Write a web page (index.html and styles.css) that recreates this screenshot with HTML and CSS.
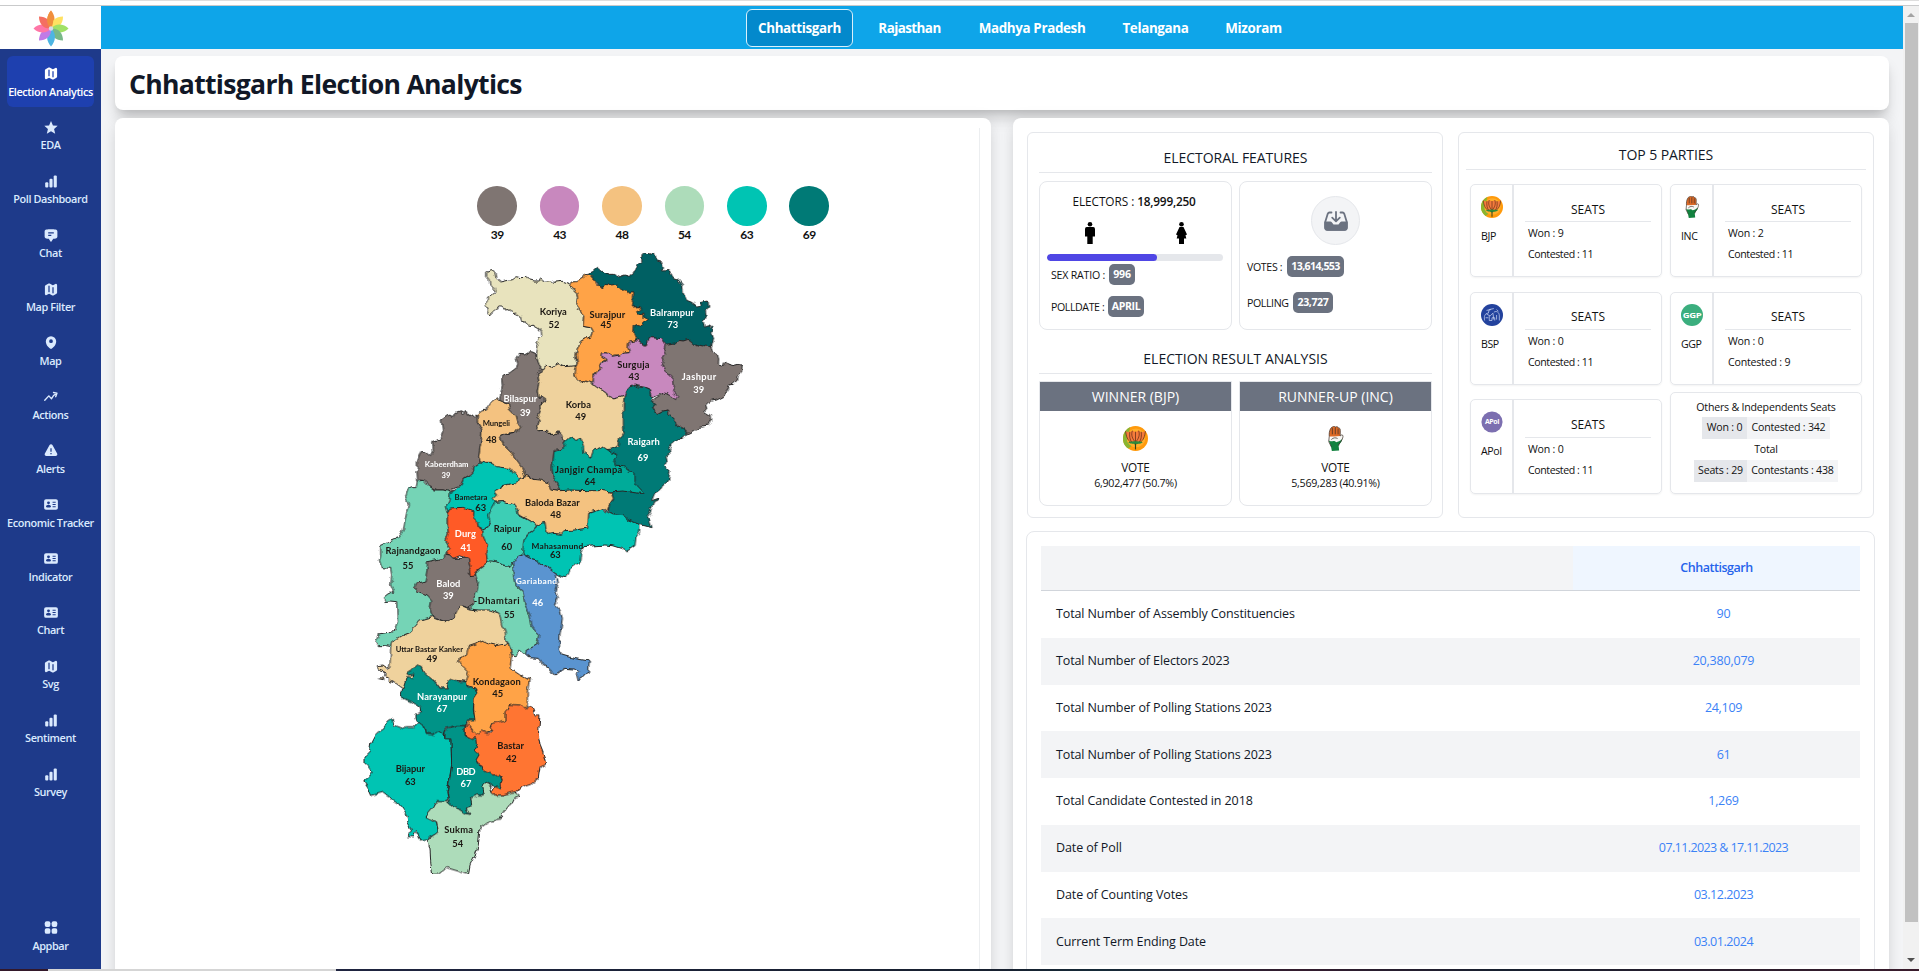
FILE: index.html
```
<!DOCTYPE html>
<html lang="en">
<head>
<meta charset="utf-8">
<title>Chhattisgarh Election Analytics</title>
<link rel="stylesheet" href="styles.css">
</head>
<body>
<svg class="defs" width="0" height="0">
  <defs>
    <symbol id="i-map" viewBox="0 0 24 24"><path fill-rule="evenodd" d="M8.161 2.58a1.875 1.875 0 011.678 0l4.993 2.498c.106.052.23.052.336 0l3.869-1.935A1.875 1.875 0 0121.75 4.82v12.485c0 .71-.401 1.36-1.037 1.677l-4.875 2.437a1.875 1.875 0 01-1.676 0l-4.994-2.497a.375.375 0 00-.336 0l-3.868 1.935A1.875 1.875 0 012.25 19.18V6.695c0-.71.401-1.36 1.036-1.677zM8.8 5.6a1 1 0 011 1V15.4a1 1 0 01-2 0V6.6A1 1 0 018.8 5.6zM16.2 9a1 1 0 00-2 0v8.25a1 1 0 002 0z"/></symbol>
    <symbol id="i-star" viewBox="0 0 24 24"><path d="M12 1.6l3.1 7 7.6.7-5.8 5 1.8 7.5L12 17.800l-6.7 4 1.800-7.500-5.800-5 7.600-.7z"/></symbol>
    <symbol id="i-bars" viewBox="0 0 24 24"><rect x="16.300" y="2.250" width="5" height="19.500" rx="1.800"/><rect x="9.500" y="7.500" width="5" height="14.250" rx="1.800"/><rect x="2.700" y="13" width="5" height="8.750" rx="1.800"/></symbol>
    <symbol id="i-chat" viewBox="0 0 24 24"><path fill-rule="evenodd" d="M4.500 2.500C8 2 16 2 19.500 2.500c1.700.2 2.700 1.600 2.700 3.200v8c0 1.700-1 3-2.700 3.200-1.300.2-2.600.3-3.900.4L12.700 21.500a1 1 0 01-1.500 0L8.400 17.300c-1.300-.1-2.600-.2-3.900-.4C2.800 16.700 1.800 15.400 1.800 13.700v-8C1.800 4.100 2.800 2.700 4.500 2.500zM7.500 6.800v1.800h9V6.800zm0 4v1.800h5v-1.800z"/></symbol>
    <symbol id="i-pin" viewBox="0 0 24 24"><path fill-rule="evenodd" d="M12 1.800a8.300 8.300 0 00-8.300 8.300c0 6 4.300 10 7.500 12a1.500 1.500 0 001.600 0c3.200-2 7.500-6 7.500-12A8.300 8.300 0 0012 1.800zm0 5a3 3 0 110 6 3 3 0 010-6z"/></symbol>
    <symbol id="i-trend" viewBox="0 0 24 24"><path fill="none" stroke="currentColor" stroke-width="2.200" stroke-linecap="round" stroke-linejoin="round" d="M2 18l6.500-7 4.300 4.500C14.500 11.500 17 8.800 21 7M16 5.600l5.500 1.200-2 5.500"/></symbol>
    <symbol id="i-alert" viewBox="0 0 24 24"><path fill-rule="evenodd" d="M9.700 3.300a2.700 2.700 0 014.600 0l7.500 13.500c1 1.800-.3 4-2.300 4h-15c-2 0-3.300-2.200-2.300-4zM11 8.500v5.500h2V8.500zm0 7.300v2h2v-2z"/></symbol>
    <symbol id="i-card" viewBox="0 0 24 24"><path fill-rule="evenodd" d="M4 3.500h16a3 3 0 013 3v11a3 3 0 01-3 3H4a3 3 0 01-3-3v-11a3 3 0 013-3zM8 7a2.300 2.300 0 100 4.600A2.300 2.300 0 008 7zm-4 9c0-2.600 1.700-3.700 4-3.700s4 1.100 4 3.700c-2.500 1.300-5.500 1.300-8 0zM14.500 7.500V9h5V7.500zm0 3.700v1.500h5v-1.500zm0 3.700v1.500h5v-1.500z"/></symbol>
    <symbol id="i-grid" viewBox="0 0 24 24"><rect x="2" y="2" width="9" height="9" rx="3"/><rect x="13" y="2" width="9" height="9" rx="3"/><rect x="2" y="13" width="9" height="9" rx="3"/><rect x="13" y="13" width="9" height="9" rx="3"/></symbol>
    <symbol id="i-bjp" viewBox="0 0 24 24">
      <circle cx="12" cy="12" r="12" fill="#ff9a0c"/><path d="M7 1A12 12 0 005 21.700C8 20 9 18 9 16L4 12z" fill="#8ab530"/><circle cx="12.500" cy="11.500" r="9" fill="#ffae2b"/>
      <path d="M2.500 5l4 1.200L9 4.500l3 1.200L15 4.500l2.500 1.700 4-1.200-1.500 7-3.500 3.300h-9L4 12z" fill="#f47a3c"/>
      <path d="M2.500 5c.5 5 2 9 5 10.500M6.500 5.500c-.5 4 0 8 2 10M9 4.500c-1.500 4 0 8 3 11M12 5.500v10M15 4.500c1.500 4 0 8-3 11M17.500 5.500c.5 4 0 8-2 10M21.500 5c-.5 5-2 9-5 10.500" fill="none" stroke="#5c2a14" stroke-width=".7"/>
      <path d="M5 15.500c4-1 10-1 14 0-3 2.200-5.500 1-7 2.500-1.500-1.500-4-.3-7-2.500z" fill="#2c8a3c"/><path d="M12 17v5.500" stroke="#33421b" stroke-width="1.100"/>
    </symbol>
    <symbol id="i-inc" viewBox="0 0 24 24">
      <path d="M6 10C5.500 4 8 1 9 1c1-1.200 2-1 3 0 1.300-.7 2.300-.3 2.800.8 1.300 0 1.800 1 1.800 2.500L16.500 10z" fill="#dd6a26"/>
      <path d="M5.500 14L8 11l8.500-1.500L18 8.500c1.300 0 1.300 1.300 0 5L15 16.500 6 17z" fill="#f7f7f4"/><path d="M5.500 14c2 2 5-1 7 1.500 2 0 4-1.500 6-3-.5 3.500-3 4.500-3.500 6.500l.5 4.500-7 .5-.8-4z" fill="#12823f"/>
      <path d="M6 10C5.500 4 8 1 9 1c1-1.200 2-1 3 0 1.300-.7 2.300-.3 2.800.8 1.300 0 1.800 1 1.800 2.500L16.500 9.500 18 8.500c2 0 1 3 .5 4-1 3-3.500 4-3.500 6.500M6 10l-.5 5L8 20M9 2v6M11.800 1.500V8M14.500 2.500V8M8 13c2-2 4-2 6-1" fill="none" stroke="#3d3029" stroke-width=".7"/>
    </symbol>
    <symbol id="i-bsp" viewBox="0 0 24 24"><circle cx="12" cy="12" r="12" fill="#23429d"/><path d="M4 18c-1-4 0-8 4-8l1-4 5-1M6 11l4 2 3-3 1 7M9 13v5h3v-3h3v3M14 9c3-2 6 0 6 4v5M17 6l2 2M5 15h3M17 12v5M6 7l5-1" fill="none" stroke="#c9d4f2" stroke-width=".8"/></symbol>
    <symbol id="i-ggp" viewBox="0 0 24 24"><circle cx="12" cy="12" r="12" fill="#3bae7e"/><text x="12" y="15.100" text-anchor="middle" textLength="20" lengthAdjust="spacingAndGlyphs" font-size="8.500" font-weight="700" fill="#fff">GGP</text></symbol>
    <symbol id="i-apol" viewBox="0 0 24 24"><circle cx="12" cy="12" r="11.500" fill="#7c6fb0"/><text x="12" y="14.500" text-anchor="middle" textLength="15.500" lengthAdjust="spacingAndGlyphs" font-size="6.800" font-weight="700" fill="#fff">APoI</text></symbol>
  </defs>
</svg>

<div class="edge-top"></div>
<div class="app">
  <aside class="side">
    <div class="logo">
      <svg width="36" height="37" viewBox="-18 -18 36 36">
        <g opacity=".95">
        <path d="M0 0C-5-5-4.500-13 0-18 4.500-13 5-5 0 0z" fill="#f08a33"/>
        <path d="M0 0C-6-5-5-12 0-17 5-12 6-5 0 0z" fill="#ffe05a" transform="rotate(45)"/>
        <path d="M0 0C-6-5-4.500-13 0-17.500 4.500-13 6-5 0 0z" fill="#9be05e" transform="rotate(90)"/>
        <path d="M0 0C-6-5-5-12 0-17 5-12 6-5 0 0z" fill="#71b583" transform="rotate(135)"/>
        <path d="M0 0C-6-5-4.500-13 0-18 4.500-13 6-5 0 0z" fill="#44b2e2" transform="rotate(180)"/>
        <path d="M0 0C-6-5-5-12 0-17 5-12 6-5 0 0z" fill="#bd74e6" transform="rotate(225)"/>
        <path d="M0 0C-6-5-4.500-13 0-17.500 4.500-13 6-5 0 0z" fill="#ff6fa3" transform="rotate(270)"/>
        <path d="M0 0C-6-5-5-12 0-17 5-12 6-5 0 0z" fill="#f4685a" transform="rotate(315)"/>
        <path d="M0 0C-6-5-4.500-13 0-18 3-13 3-5 0 0z" fill="#f08a33"/>
        </g>
        <circle r="2.200" fill="#d8dde8"/>
      </svg>
    </div>
    <nav class="menu">
      <a class="item active"><svg class="ico"><use href="#i-map"/></svg><span>Election Analytics</span></a>
      <a class="item"><svg class="ico"><use href="#i-star"/></svg><span>EDA</span></a>
      <a class="item"><svg class="ico"><use href="#i-bars"/></svg><span>Poll Dashboard</span></a>
      <a class="item"><svg class="ico"><use href="#i-chat"/></svg><span>Chat</span></a>
      <a class="item"><svg class="ico"><use href="#i-map"/></svg><span>Map Filter</span></a>
      <a class="item"><svg class="ico"><use href="#i-pin"/></svg><span>Map</span></a>
      <a class="item"><svg class="ico"><use href="#i-trend"/></svg><span>Actions</span></a>
      <a class="item"><svg class="ico"><use href="#i-alert"/></svg><span>Alerts</span></a>
      <a class="item"><svg class="ico"><use href="#i-card"/></svg><span>Economic Tracker</span></a>
      <a class="item"><svg class="ico"><use href="#i-card"/></svg><span>Indicator</span></a>
      <a class="item"><svg class="ico"><use href="#i-card"/></svg><span>Chart</span></a>
      <a class="item"><svg class="ico"><use href="#i-map"/></svg><span>Svg</span></a>
      <a class="item"><svg class="ico"><use href="#i-bars"/></svg><span>Sentiment</span></a>
      <a class="item"><svg class="ico"><use href="#i-bars"/></svg><span>Survey</span></a>
      <a class="item last"><svg class="ico"><use href="#i-grid"/></svg><span>Appbar</span></a>
    </nav>
  </aside>

  <main class="main">
    <header class="states">
      <a class="state on">Chhattisgarh</a><a class="state s2">Rajasthan</a><a class="state s3">Madhya Pradesh</a><a class="state s4">Telangana</a><a class="state s5">Mizoram</a>
    </header>
    <div class="content">
      <div class="card title"><h1>Chhattisgarh Election Analytics</h1></div>
      <div class="panels">
        <section class="card map-card">
          <div class="map-frame">
            <div class="legend">
              <div class="key"><i class="dot c39"></i>39</div>
              <div class="key"><i class="dot c43"></i>43</div>
              <div class="key"><i class="dot c48"></i>48</div>
              <div class="key"><i class="dot c54"></i>54</div>
              <div class="key"><i class="dot c63"></i>63</div>
              <div class="key"><i class="dot c69"></i>69</div>
            </div>
            <svg class="map" width="420" height="650" viewBox="0 0 1260 1950">
              <filter id="rough" x="0" y="0" width="100%" height="100%"><feTurbulence type="fractalNoise" baseFrequency=".045" numOctaves="2" seed="4"/><feDisplacementMap in="SourceGraphic" scale="16" xChannelSelector="R" yChannelSelector="G"/></filter>
              <g class="land" filter="url(#rough)">
                <path fill="#e8e3bd" d="M440 101L455 97 465 104 468 119 483 131 505 126 515 124 528 115 541 118 558 117 563 124 580 128 598 128 603 121 609 129 635 127 640 132 666 129 690 137 697 150 710 163 713 178 709 193 717 208 713 214 731 233 729 264 751 268 757 280 752 297 737 300 722 309 711 334 708 352 710 378 705 386 676 385 655 376 638 386 620 384 607 393 595 378 590 358 590 341 594 320 588 308 605 293 604 280 598 272 580 261 567 261 560 252 545 248 541 235 527 224 519 226 508 211 494 212 483 205 465 214 461 218 448 230 442 219 441 206 432 203 441 193 443 176 453 174 466 160 462 150 450 138 447 123 440 115Z"/>
                <path fill="#006164" d="M740 102L757 98 770 87 782 97 806 108 822 108 837 115 852 110 867 114 880 107 893 83 905 70 906 52 915 43 933 48 944 45 949 64 965 69 970 85 968 98 988 97 999 117 1014 124 1028 140 1030 165 1040 186 1055 192 1070 203 1084 201 1082 190 1104 185 1106 210 1099 216 1101 232 1089 250 1094 267 1106 262 1116 268 1113 285 1118 298 1113 320 1112 326 1098 322 1085 326 1068 322 1060 314 1045 303 1030 308 1015 306 1005 316 980 320 962 301 945 300 930 298 925 306 922 318 908 318 893 308 881 308 850 240 770 130Z"/>
                <path fill="#ffa347" d="M688 146L697 131 711 130 733 116 731 104 752 109 765 124 770 138 784 148 796 138 815 143 830 140 846 156 856 154 865 165 879 163 877 180 882 190 880 206 898 205 902 214 890 220 895 228 912 224 912 238 922 245 905 262 893 258 883 262 881 285 887 300 880 312 866 315 865 330 868 340 850 342 840 350 822 350 815 354 800 344 788 344 786 354 800 362 798 370 783 373 779 381 785 390 770 400 762 410 760 430 750 437 735 427 720 432 708 422 704 402 707 386 712 376 709 352 711 334 722 309 737 300 752 297 757 280 751 268 729 264 731 233 713 214 717 208 709 193 713 178 710 163 697 150Z"/>
                <path fill="#7f7572" d="M976 318L1005 314 1015 306 1030 308 1045 303 1060 314 1068 322 1085 326 1098 320 1112 326 1118 340 1132 348 1136 362 1135 378 1150 382 1155 370 1165 378 1180 382 1195 378 1207 386 1205 400 1195 412 1192 425 1180 438 1168 440 1165 455 1150 475 1130 485 1112 488 1100 500 1103 512 1094 520 1110 530 1112 545 1104 560 1082 564 1065 576 1045 586 1033 575 1025 565 1012 562 1003 545 985 528 985 515 970 518 955 526 945 520 937 505 945 500 935 490 948 480 962 472 975 464 966 358 972 335Z"/>
                <path fill="#007a76" d="M853 474L858 460 868 447 882 440 900 447 915 447 932 455 930 472 938 480 935 490 945 500 937 505 945 520 955 526 970 518 985 515 985 528 1003 545 1012 562 1025 565 1043 588 1030 600 1010 602 998 612 987 630 990 645 978 655 982 672 974 685 990 700 985 728 970 740 962 755 942 768 935 790 958 782 955 788 942 792 934 810 930 825 922 835 930 848 936 868 905 860 885 853 865 848 845 836 820 830 805 820 808 800 820 785 815 757 800 700 800 630 837 622 838 606 845 582 845 560Z"/>
                <path fill="#c888be" d="M800 344L815 354 840 350 850 342 868 340 865 330 866 312 880 308 893 308 908 320 922 320 925 306 932 298 950 300 965 301 976 318 972 335 976 345 966 358 972 372 965 382 974 398 988 408 1001 424 1003 443 998 460 1013 475 1007 484 990 472 975 464 962 468 950 473 937 479 930 462 933 455 915 447 900 444 882 440 868 447 858 460 853 474 836 480 820 482 805 470 790 458 770 447 760 438 760 418 770 402 785 390 779 380 800 370 800 362 786 354 788 343Z"/>
                <path fill="#7f7572" d="M529 362L538 348 553 350 570 340 587 345 590 360 597 378 607 393 593 410 597 430 592 455 595 478 614 478 613 494 600 500 602 520 592 540 598 548 590 570 595 577 622 576 625 588 640 588 655 580 665 590 668 600 677 607 672 622 660 634 642 636 640 660 636 690 640 720 655 740 664 757 650 755 632 756 625 735 600 725 580 720 556 712 545 690 530 670 515 645 490 620 478 597 490 590 525 585 540 565 530 550 525 530 510 515 505 500 478 485 482 470 487 440 485 420 490 410 510 403 530 388 533 375Z"/>
                <path fill="#efd29d" d="M607 393L620 384 638 386 655 376 676 385 705 382 707 395 704 410 712 428 735 427 755 435 770 447 790 458 805 470 820 482 836 478 853 474 850 500 850 560 852 582 838 606 837 622 815 632 788 635 760 650 752 660 742 660 732 655 722 622 712 610 700 616 690 608 677 610 668 600 665 590 655 580 640 588 625 588 622 576 595 577 590 570 598 548 592 540 602 520 600 500 615 492 612 478 595 480 592 455 597 430 593 410Z"/>
                <path fill="#00c4b3" d="M402 685L416 660 470 670 520 695 556 714 535 730 525 745 500 750 475 750 468 770 470 780 474 790 462 805 455 830 448 850 442 868 430 872 415 865 405 850 395 835 385 820 370 815 350 818 320 818 314 800 328 790 325 758 340 755 362 742 370 722 388 712 400 700Z"/>
                <path fill="#f4c280" d="M408 530L425 515 440 512 455 490 470 478 485 490 505 500 510 515 525 530 530 548 540 565 525 585 490 588 478 597 490 620 515 645 545 685 556 714 540 718 522 705 510 690 490 688 470 685 455 675 435 675 420 670 416 655 425 590 425 570 412 550Z"/>
                <path fill="#7f7572" d="M304 545L325 530 340 535 348 525 362 520 368 530 377 519 385 536 397 529 405 540 412 530 412 550 425 570 425 590 416 655 420 672 402 685 400 700 388 712 370 722 362 740 340 748 335 762 310 755 290 755 270 745 258 728 240 725 230 728 228 700 232 690 232 670 243 640 255 640 272 655 280 640 278 610 300 602 308 580Z"/>
                <path fill="#75d4b6" d="M205 750L215 745 228 745 232 728 250 726 265 742 285 755 310 755 328 760 325 785 316 805 322 825 322 860 325 885 318 910 330 930 330 950 300 970 270 978 262 985 262 1005 258 1025 240 1040 245 1060 270 1070 283 1085 280 1115 280 1137 240 1150 225 1165 210 1180 190 1188 175 1205 155 1215 152 1225 135 1222 115 1222 108 1210 115 1190 145 1185 165 1178 172 1150 170 1090 150 1088 138 1090 133 1078 145 1068 160 1060 152 1040 155 1010 152 990 125 988 118 965 122 950 122 922 150 910 175 900 190 875 195 845 200 820 205 800 197 775Z"/>
                <path fill="#00ab99" d="M677 610L690 598 705 606 722 600 730 622 732 645 752 660 760 636 788 625 808 638 830 648 822 665 830 684 850 685 870 700 882 705 882 730 892 745 912 767 880 762 850 758 790 762 740 762 690 760 664 760 655 740 640 720 636 690 640 660 642 640 660 634 672 622Z"/>
                <g transform="translate(0 660)">
                  <path fill="#00c4b3" d="M552 245L565 228 590 205 605 190 614 188 620 210 640 200 740 190 743 165 770 158 780 148 803 162 820 170 850 172 865 185 900 198 898 225 888 235 885 262 862 278 845 270 820 262 795 260 730 265 722 285 720 310 690 335 680 358 665 355 645 345 620 325 600 318 590 305 570 300 550 290 540 280Z"/>
                  <path fill="#f4c280" d="M500 82L525 77 540 58 560 52 580 60 600 62 625 75 632 92 660 97 690 95 740 97 790 97 815 102 820 120 805 145 803 158 790 150 770 158 743 165 740 210 700 215 675 217 665 228 640 225 625 228 618 212 615 192 590 202 572 190 535 170 530 150 522 138 500 135 490 130 465 132 460 120 470 110 462 100 478 88Z"/>
                  <path fill="#3dceb5" d="M465 132L490 130 500 135 520 138 530 150 535 170 572 190 590 202 580 215 565 225 552 245 548 285 530 298 518 318 508 330 490 325 472 315 445 315 438 290 435 262 425 235 430 213 445 205 450 190 446 170 455 150Z"/>
                  <path fill="#5a94d0" d="M515 320L530 298 548 288 570 300 590 305 600 318 620 325 645 345 652 370 645 400 652 415 643 438 660 455 667 480 660 530 658 570 665 590 700 600 748 608 745 645 720 655 712 668 708 650 718 640 700 632 672 630 645 650 630 630 610 622 595 600 565 598 556 590 560 575 540 500 520 380Z"/>
                  <path fill="#75d4b6" d="M442 308L460 308 490 320 508 325 518 315 520 350 525 380 548 400 555 440 570 470 575 500 597 530 590 560 560 575 556 590 540 575 528 590 515 585 505 555 495 540 485 520 475 500 468 475 450 465 420 465 400 460 388 452 400 435 398 420 400 400 405 380 400 350 430 325Z"/>
                  <path fill="#7f7572" d="M262 310L310 300 318 288 330 290 340 300 385 300 390 322 385 350 410 345 415 375 410 400 402 420 405 435 385 448 365 442 348 460 340 478 315 490 290 480 275 470 270 450 275 425 262 410 235 400 222 388 228 375 255 368 258 352 262 330Z"/>
                  <path fill="#ff5a28" d="M322 165L330 152 372 150 385 155 402 160 400 178 412 190 415 205 428 215 430 235 442 262 438 280 442 308 430 325 410 340 405 350 388 352 385 335 390 322 385 300 360 292 340 300 330 290 318 285 330 270 318 250 325 225 322 200Z"/>
                  <path fill="#efd29d" d="M152 565L155 550 190 528 210 520 225 505 240 485 275 475 290 482 315 490 340 478 348 460 365 442 388 452 420 455 450 455 478 465 485 500 495 520 500 560 440 600 378 670 345 665 325 690 300 690 285 670 200 680 188 692 165 675 148 668 148 655 134 653 136 640 115 633 112 622 130 620 140 630 150 625ZM110 660L120 658 132 660 130 664Z"/>
                  <path fill="#ffa347" d="M385 565L405 558 430 548 440 555 470 562 505 555 515 590 510 630 540 650 568 665 562 700 562 750 540 750 510 745 500 770 495 792 478 800 455 805 460 818 440 825 425 832 410 832 395 820 380 808 385 785 402 780 400 750 402 720 412 705 405 690 380 680 378 665 385 640 370 625 355 605 380 590Z"/>
                </g>
                <g transform="translate(0 1230)">
                  <path fill="#00c4b3" d="M158 210L162 230 188 240 200 235 220 235 240 222 260 240 262 255 280 258 295 248 310 258 312 270 333 272 335 350 330 380 325 410 320 430 325 455 315 462 290 460 280 475 270 512 290 520 295 550 280 562 262 572 240 575 235 558 225 550 222 565 202 565 205 555 218 545 205 525 200 500 190 485 175 465 158 455 145 442 130 432 92 442 80 415 68 397 85 388 97 372 92 360 75 345 75 325 88 312 92 285 105 260 120 245 130 240 145 218Z"/>
                  <path fill="#009387" d="M200 85L218 90 222 78 205 80 200 75 215 65 232 50 245 55 250 72 265 85 285 100 300 120 325 118 320 105 328 92 345 98 378 100 382 112 405 120 412 135 402 150 400 185 405 215 382 215 378 232 350 232 315 240 310 258 295 248 280 258 262 255 260 240 240 225 225 212 225 198 245 190 243 178 215 160 183 145 188 122Z"/>
                  <path fill="#addcba" d="M255 505L280 475 290 460 320 460 335 465 350 450 410 420 425 415 438 402 452 412 455 435 470 440 490 440 520 428 540 445 525 450 520 462 505 470 490 490 480 515 455 518 440 525 420 540 415 590 405 620 390 650 385 678 360 670 320 658 295 678 278 678 272 640 270 600 262 575 280 562 295 550 290 520 270 512Z"/>
                  <path fill="#ff7433" d="M375 235L385 232 395 245 410 258 425 248 440 255 452 255 460 250 450 238 455 225 478 220 495 215 495 190 505 180 510 168 540 170 555 178 575 175 585 200 600 200 598 225 595 260 600 290 610 315 617 348 600 355 595 390 575 405 545 415 530 430 515 432 490 440 460 440 455 435 465 415 440 375 408 335 405 290 390 270 375 262Z"/>
                  <path fill="#009387" d="M312 245L350 232 375 232 375 262 390 270 410 268 412 290 405 305 418 318 408 335 420 355 440 372 460 380 480 378 487 395 480 410 485 422 465 415 450 408 438 402 425 415 430 440 410 440 392 450 395 470 378 480 390 498 375 495 350 478 330 465 325 455 322 430 328 400 335 350 333 272 312 270Z"/>
                </g>
              </g>
              <g class="names">
                <text x="640" y="227" textLength="81">Koriya</text><text x="642" y="268">52</text>
                <text x="802" y="237" textLength="107">Surajpur</text><text x="798" y="267">45</text>
                <text class="w" x="996" y="232" textLength="132">Balrampur</text><text class="w" x="998" y="268">73</text>
                <text x="880" y="388" textLength="97">Surguja</text><text x="882" y="423">43</text>
                <text class="w" x="1077" y="422" textLength="103">Jashpur</text><text class="w" x="1076" y="461">39</text>
                <text class="w" x="541" y="488" textLength="101">Bilaspur</text><text class="w" x="556" y="531">39</text>
                <text x="715" y="507" textLength="76">Korba</text><text x="722" y="542">49</text>
                <text class="s" x="469" y="561" textLength="82">Mungeli</text><text x="454" y="611">48</text>
                <text class="w" x="911" y="617" textLength="97">Raigarh</text><text class="w" x="909" y="665">69</text>
                <text class="w s" x="320" y="683" textLength="131">Kabeerdham</text><text class="w s" x="318" y="717">39</text>
                <text x="746" y="702" textLength="202">Janjgir Champa</text><text x="750" y="738">64</text>
                <text class="s" x="393" y="782" textLength="99">Bametara</text><text x="422" y="815">63</text>
                <text x="637" y="800" textLength="164">Baloda Bazar</text><text x="647" y="837">48</text>
                <text class="w" x="376" y="895" textLength="63">Durg</text><text class="w" x="378" y="935">41</text>
                <text x="502" y="880" textLength="82">Raipur</text><text x="500" y="934">60</text>
                <text class="m" x="652" y="929" textLength="155">Mahasamund</text><text x="646" y="956">63</text>
                <text x="219" y="946" textLength="165">Rajnandgaon</text><text x="204" y="990">55</text>
                <text class="w" x="325" y="1043" textLength="72">Balod</text><text class="w" x="325" y="1081">39</text>
                <text class="w m" x="589" y="1036" textLength="124">Gariaband</text><text class="w" x="593" y="1100">46</text>
                <text x="470" y="1096" textLength="137">-Dhamtari</text><text x="508" y="1137">55</text>
                <text class="s" x="268" y="1238" textLength="202">Uttar Bastar Kanker</text><text x="276" y="1268">49</text>
                <text x="470" y="1337" textLength="144">Kondagaon</text><text x="473" y="1375">45</text>
                <text class="w" x="306" y="1382" textLength="150">Narayanpur</text><text class="w" x="306" y="1419">67</text>
                <text x="512" y="1529" textLength="80">Bastar</text><text x="514" y="1569">42</text>
                <text x="211" y="1598" textLength="88">Bijapur</text><text x="211" y="1637">63</text>
                <text class="w" x="378" y="1607" textLength="58">DBD</text><text class="w" x="378" y="1643">67</text>
                <text x="356" y="1781" textLength="86">Sukma</text><text x="353" y="1824">54</text>
              </g>
            </svg>
          </div>
        </section>

        <section class="card data-card">
          <div class="top-row">
            <div class="box features">
              <h2 class="head h-a">ELECTORAL FEATURES</h2>
              <div class="pair p-a">
                <div class="tile electors">
                  <p class="el"><span>ELECTORS :</span> <b>18,999,250</b></p>
                  <div class="people">
                    <svg width="10" height="22" viewBox="0 0 10 22"><circle cx="5" cy="2.300" r="2.300"/><path d="M1.800 5h6.400Q10 5 10 7v7.500H7.700V22H2.300V14.500H0V7Q0 5 1.800 5z"/></svg>
                    <svg width="11" height="22" viewBox="0 0 11 22"><circle cx="5.500" cy="2.300" r="2.300"/><path d="M3.500 5h4l3.500 7.500-1.500.8.800 3.200H8V22H3v-5.500H.7l.8-3.200-1.500-.8z"/></svg>
                  </div>
                  <div class="meter"><i></i></div>
                  <p class="line l1"><span class="t-sex">SEX RATIO :</span><em class="b996">996</em></p>
                  <p class="line l2"><span class="t-poll">POLLDATE :</span><em class="bapr">APRIL</em></p>
                </div>
                <div class="tile votes">
                  <div class="round"><svg width="24" height="20" viewBox="0 0 24 20" fill="none" stroke="#6b7280" stroke-width="1.800" stroke-linecap="round" stroke-linejoin="round"><path d="M7.500 1.500H5.500C4.500 1.500 4 2.200 3.600 3.200L1.200 11v5.200c0 1.500 1 2.600 2.500 2.600h16.600c1.500 0 2.500-1.100 2.500-2.600V11L20.400 3.200C20 2.200 19.500 1.500 18.500 1.500h-2M12 .9v9M8.200 6.700L12 10.300l3.800-3.600"/><path d="M1.200 11.500h5.300c1.200 0 1.500 2.800 3 2.800h5c1.500 0 1.800-2.800 3-2.800h5.300v4.700c0 1.500-1 2.600-2.500 2.600H3.700c-1.500 0-2.500-1.100-2.500-2.600z" fill="#6b7280"/></svg></div>
                  <p class="line v1"><span>VOTES :</span><em class="b13">13,614,553</em></p>
                  <p class="line v2"><span>POLLING</span><em class="b23">23,727</em></p>
                </div>
              </div>
              <h2 class="head h-b">ELECTION RESULT ANALYSIS</h2>
              <div class="pair p-b">
                <div class="tile result"><h3>WINNER (BJP)</h3><svg class="emblem"><use href="#i-bjp"/></svg><p class="v">VOTE</p><p class="n">6,902,477 (50.7%)</p></div>
                <div class="tile result"><h3>RUNNER-UP (INC)</h3><svg class="emblem"><use href="#i-inc"/></svg><p class="v">VOTE</p><p class="n">5,569,283 (40.91%)</p></div>
              </div>
            </div>

            <div class="box parties">
              <h2 class="head h-c">TOP 5 PARTIES</h2>
              <div class="party-cols">
                <div class="pcol">
                  <div class="party first"><div class="who"><svg><use href="#i-bjp"/></svg>BJP</div><div class="seats"><h4>SEATS</h4><p>Won : 9</p><p class="c11">Contested : 11</p></div></div>
                  <div class="party"><div class="who"><svg><use href="#i-bsp"/></svg>BSP</div><div class="seats"><h4>SEATS</h4><p>Won : 0</p><p class="c11">Contested : 11</p></div></div>
                  <div class="party tall"><div class="who"><svg><use href="#i-apol"/></svg>APoI</div><div class="seats"><h4>SEATS</h4><p>Won : 0</p><p class="c11">Contested : 11</p></div></div>
                </div>
                <div class="pcol">
                  <div class="party first"><div class="who"><svg><use href="#i-inc"/></svg>INC</div><div class="seats"><h4>SEATS</h4><p>Won : 2</p><p class="c11">Contested : 11</p></div></div>
                  <div class="party"><div class="who"><svg><use href="#i-ggp"/></svg>GGP</div><div class="seats"><h4>SEATS</h4><p>Won : 0</p><p>Contested : 9</p></div></div>
                  <div class="others">
                    <p>Others &amp; Independents Seats</p>
                    <p class="chips"><span class="dk w45">Won : 0</span><span class="lt w83">Contested : 342</span></p>
                    <p>Total</p>
                    <p class="chips"><span class="dk w53">Seats : 29</span><span class="lt w91">Contestants : 438</span></p>
                  </div>
                </div>
              </div>
            </div>
          </div>

          <div class="table-box">
            <table>
              <thead><tr><th></th><th class="st">Chhattisgarh</th></tr></thead>
              <tbody>
                <tr><td>Total Number of Assembly Constituencies</td><td>90</td></tr>
                <tr><td>Total Number of Electors 2023</td><td>20,380,079</td></tr>
                <tr><td>Total Number of Polling Stations 2023</td><td class="n1">24,109</td></tr>
                <tr><td>Total Number of Polling Stations 2023</td><td class="n1">61</td></tr>
                <tr><td>Total Candidate Contested in 2018</td><td class="n1">1,269</td></tr>
                <tr><td>Date of Poll</td><td class="n2">07.11.2023 &amp; 17.11.2023</td></tr>
                <tr><td>Date of Counting Votes</td><td class="n3">03.12.2023</td></tr>
                <tr><td>Current Term Ending Date</td><td class="n3">03.01.2024</td></tr>
                <tr><td></td><td></td></tr>
              </tbody>
            </table>
          </div>
        </section>
      </div>
    </div>
  </main>

  <div class="scroll"><i class="up"></i><div class="thumb"></div><i class="down"></i></div>
</div>
<div class="edge-bottom"></div>
</body>
</html>
```

FILE: styles.css
```
* { box-sizing: border-box; margin: 0; padding: 0; }
html, body { height: 971px; overflow: hidden; }
body { font-family: "Open Sans", "Noto Sans", sans-serif; color: #111; background: #fff; display: flex; flex-direction: column; }
.defs { position: absolute; }
h1, h2, h3, h4, th { font-weight: 500; }

.edge-top { height: 6px; flex: none; background: linear-gradient(90deg, #fff 120px, #dedede 120px) 0 0 / 100% 1px no-repeat #fff; border-bottom: 1px solid #c9cacb; }
.edge-bottom { height: 2px; flex: none; background: linear-gradient(90deg, #33182a 0 48px, #d5d5d5 48px 336px, #1f2440 336px, #17202f 1000px, #152a38 1100px, #341c2e 1300px, #17202f 1500px, #3a1c2c); }
.app { flex: 1; min-height: 0; display: flex; overflow: hidden; }

/* Sidebar */
.side { width: 101px; background: #1e3a8a; display: flex; flex-direction: column; }
.logo { height: 43px; background: #fff; display: flex; align-items: center; justify-content: center; padding-top: 1px; }
.menu { flex: 1; padding: 7px 7px 8px; display: flex; flex-direction: column; gap: 2.9px; }
.item { height: 51px; flex: none; border-radius: 6px; padding-top: 10px; color: #dbeafe; font-size: 10.9px; font-weight: 600; letter-spacing: -.4px; line-height: 15px; display: flex; flex-direction: column; align-items: center; white-space: nowrap; }
.item.active { background: #1e40af; color: #fff; }
.item.last { margin-top: auto; }
.ico { width: 16px; height: 15px; fill: currentColor; margin-bottom: 2.500px; }
.item span { margin: 0 -10px; }

/* Header */
.main { width: 1802px; display: flex; flex-direction: column; background: #f3f4f6; overflow: hidden; }
.states { height: 43px; flex: none; background: #0ea5e9; display: flex; align-items: flex-start; padding: 3px 0 0 645px; }
.state { height: 38px; line-height: 36px; padding: 0; margin-right: 13px; border: 1px solid transparent; border-radius: 6px; color: #fff; font-size: 13.4px; font-weight: 700; letter-spacing: -.35px; text-align: center; white-space: nowrap; }
.state.on { width: 107px; background: #0389cc; border-color: #d9f0fb; }
.s2 { width: 87px; letter-spacing: -.55px; } .s3 { width: 132px; } .s4 { width: 89px; } .s5 { width: 81px; }

/* Cards */
.content { padding: 7px 14px 0; display: flex; flex-direction: column; gap: 8px; flex: 1; min-height: 0; }
.card { background: #fff; border-radius: 8px; box-shadow: 0 0 15px rgba(0,0,0,.07), 0 10px 15px -3px rgba(0,0,0,.11); }
.title { height: 54px; flex: none; padding-left: 14px; box-shadow: 0 10px 15px -3px rgba(0,0,0,.2), 0 4px 6px -2px rgba(0,0,0,.08); }
h1 { font-size: 26.6px; font-weight: 700; letter-spacing: -.7px; line-height: 57px; color: #111827; white-space: nowrap; }
.panels { display: flex; justify-content: space-between; flex: none; height: 900px; position: relative; }
.map-card { width: 876px; padding: 10px 11px 0 0; }
.map-frame { height: 880px; border-right: 1px solid #eceef0; padding: 58px 0 0 225px; }
.legend { display: flex; margin-left: 118px; padding-left: 8px; }
.key { width: 62.4px; display: flex; flex-direction: column; align-items: center; gap: 1px; font: 700 12px/15px Lato, sans-serif; letter-spacing: -.5px; color: #111; }
.dot { width: 39.500px; height: 39.500px; border-radius: 50%; }
.c39 { background: #7f7572; } .c43 { background: #c888be; } .c48 { background: #f4c280; }
.c54 { background: #addcba; } .c63 { background: #00c4b3; } .c69 { background: #007a76; }
.map { display: block; margin-top: -3px; }
.land { transform: translateY(-2px); }
.land path { stroke: #262626; stroke-width: 3; stroke-linejoin: round; }
.names text { font: 700 28px Lato, sans-serif; text-anchor: middle; fill: #1b1712; }
.names .s { font-size: 23px; }
.names .m { font-size: 25px; }
.names .w { fill: #fff; }

.data-card { width: 876px; padding: 14px 14px 0 13px; }
.top-row { display: flex; justify-content: space-between; padding: 0 1px; }
.box { width: 416px; height: 386px; border: 1px solid #e5e7eb; border-radius: 6px; }
.head { border-bottom: 1px solid #e5e7eb; font-size: 14px; font-weight: 500; line-height: 28px; text-align: center; color: #111827; display: flex; align-items: flex-end; justify-content: center; white-space: nowrap; }
.features { padding: 0 10px 0 11px; }
.h-a { height: 40px; letter-spacing: -.04px; }
.h-b { height: 44px; letter-spacing: .02px; }
.h-c { height: 37px; line-height: 27px; padding-bottom: 1px; letter-spacing: -.08px; }
.pair { display: grid; grid-template-columns: 193px 193px; gap: 7px; }
.p-a { margin-top: 8px; height: 149px; }
.p-b { margin-top: 7px; height: 125px; }
.tile { border: 1px solid #e5e7eb; border-radius: 8px; }
p { white-space: nowrap; }
.electors { padding: 0 8px 0 7px; }
.el { font-size: 11.8px; line-height: 20px; text-align: center; margin: 9px 0 0 -2px; letter-spacing: -.05px; }
.el b { font-weight: 600; letter-spacing: -.2px; }
.people { display: flex; justify-content: space-between; padding: 0 36px 0 38px; margin-top: 11px; height: 22px; }
.meter { height: 7px; border-radius: 4px; background: #e5e7eb; margin-top: 10px; overflow: hidden; }
.meter i { display: block; width: 62.500%; height: 7px; border-radius: 4px; background: #4f46e5; }
.line { display: flex; align-items: center; font-size: 10.600px; letter-spacing: -.2px; }
.line em { font-style: normal; font-weight: 700; color: #fff; background: #6b7280; border-radius: 5px; height: 21px; line-height: 20px; text-align: center; }
.l1 { margin: 3px 0 0 4px; } .l2 { margin: 11px 0 0 4px; }
.l1 span { width: 58px; } .l2 span { width: 57px; letter-spacing: -.4px; }
.b996 { width: 26px; } .bapr { width: 36px; letter-spacing: -.4px; } .b13 { width: 57px; letter-spacing: -.6px; } .b23 { width: 40px; letter-spacing: -.4px; }
.votes { padding: 14px 7px 0; }
.round { width: 49px; height: 49px; border-radius: 50%; border: 1px solid #e5e7eb; background: #f3f4f6; margin: 0 auto; display: flex; align-items: center; justify-content: center; }
.v1 { margin: 11px 0 0; } .v1 span { width: 40px; letter-spacing: -.35px; }
.v2 { margin: 15px 0 0; } .v2 span { width: 46px; letter-spacing: -.4px; }
.result { border-radius: 0 0 8px 8px; text-align: center; }
.result h3 { height: 29px; background: #6b7280; color: #fff; font-size: 14px; font-weight: 400; line-height: 29px; }
.emblem { width: 25px; height: 25px; margin-top: 15px; display: block; margin-left: auto; margin-right: auto; }
.v { font-size: 11.800px; line-height: 18px; margin-top: 7px; letter-spacing: -.2px; }
.n { font-size: 10.700px; line-height: 14px; letter-spacing: -.28px; }

.parties { padding: 0 7px; }
.party-cols { display: flex; gap: 8px; padding: 14px 4px 0; }
.pcol { width: 192px; display: flex; flex-direction: column; gap: 15px; }
.party, .others { border: 1px solid #e5e7eb; border-radius: 5px; box-shadow: 0 1px 2px rgba(0,0,0,.05); }
.party { height: 93px; display: flex; flex: none; }
.party.tall { height: 95px; margin-top: -1px; }
.party.first .seats { padding-top: 14px; }
.party.first h4 { height: 23px; }
.who { width: 43px; border-right: 2px solid #e5e7eb; padding: 11px 0 0 10px; font-size: 10.600px; letter-spacing: -.4px; line-height: 15px; }
.who svg { width: 22px; height: 22px; display: block; margin-bottom: 11px; }
.seats { flex: 1; padding: 13px 10px 0 11px; font-size: 10.600px; line-height: 15px; letter-spacing: -.1px; }
.tall .seats { padding-top: 14px; }
.seats h4 { font-size: 12px; line-height: 22px; height: 24px; border-bottom: 1px solid #e5e7eb; text-align: center; margin-bottom: 4px; letter-spacing: 0; }
.seats p { padding-left: 3px; margin-bottom: 6px; letter-spacing: -.2px; }
.seats .c11 { letter-spacing: -.42px; }
.others { height: 102px; margin-top: -8px; padding-top: 4px; display: flex; flex-direction: column; align-items: center; font-size: 10.600px; letter-spacing: -.2px; line-height: 20px; }
.chips { display: flex; height: 22px; line-height: 21px; text-align: center; }
.others p:nth-child(3) { line-height: 21px; }
.dk { background: #e5e7eb; } .lt { background: #f3f4f6; }
.w45 { width: 45px; } .w53 { width: 53px; } .w83 { width: 83px; } .w91 { width: 91px; }

.table-box { margin-top: 13px; width: 849px; height: 500px; border: 1px solid #e5e7eb; border-radius: 8px; padding: 14px; }
table { width: 819px; border-collapse: separate; border-spacing: 0; table-layout: fixed; font-size: 12.500px; font-weight: 500; }
th { height: 45px; background: #f3f4f6; border-bottom: 1px solid #d1d5db; }
th.st { width: 287px; background: #eff6ff; color: #2563eb; letter-spacing: -.45px; font-weight: 600; padding-bottom: 1px; }
td { height: 46.750px; padding: 0 15px 1px; color: #111827; letter-spacing: -.11px; white-space: nowrap; }
td:last-child { text-align: center; color: #3b82f6; padding: 0 0 1px 14px; letter-spacing: -.2px; }
td.n1:last-child { letter-spacing: -.3px; } td.n2:last-child { letter-spacing: -.6px; } td.n3:last-child { letter-spacing: -.45px; }
tbody tr:nth-child(even) td { background: #f3f4f6; }

/* Scrollbar */
.scroll { width: 16px; background: #f1f1f1; display: flex; flex-direction: column; align-items: center; }
.up, .down { width: 0; height: 0; border: 4px solid transparent; flex: none; }
.up { border-bottom-color: #a3a3a3; border-top: 0; margin: 7px 0 6px; }
.down { border-top-color: #505050; border-bottom: 0; margin: 36px 0 0; }
.thumb { width: 13px; height: 899px; background: #c1c1c1; }
```
